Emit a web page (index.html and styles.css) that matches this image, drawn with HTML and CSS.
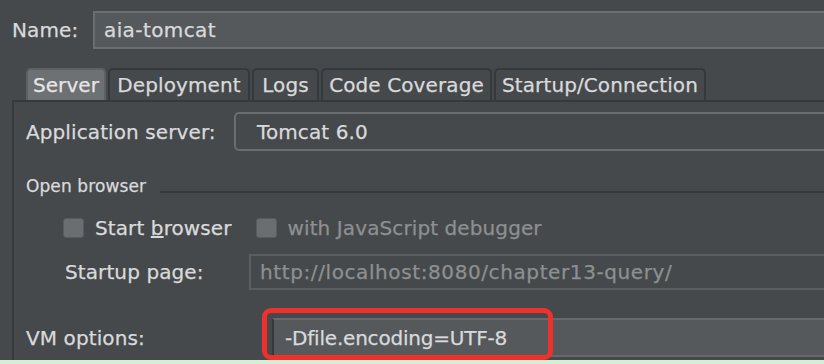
FILE: index.html
```html
<!DOCTYPE html>
<html lang="en">
<head>
    <meta charset="UTF-8">
    <meta name="viewport" content="width=device-width, initial-scale=1.0">
    <title>Run Configuration</title>
    <link rel="stylesheet" href="styles.css">
</head>
<body>
    <div class="dialog">

        <div class="name-row">
            <span class="name-label">Name:</span>
            <div class="field name-field">aia-tomcat</div>
        </div>

        <div class="tabs">
            <div class="tab tab-server selected">Server</div>
            <div class="tab tab-deploy">Deployment</div>
            <div class="tab tab-logs">Logs</div>
            <div class="tab tab-coverage">Code Coverage</div>
            <div class="tab tab-startup">Startup/Connection</div>
        </div>

        <div class="panel">
            <div class="row server-row">
                <span class="label server-label">Application server:</span>
                <div class="combo">Tomcat 6.0</div>
            </div>

            <div class="group-title">
                <span>Open browser</span>
                <div class="group-line"></div>
            </div>

            <div class="row check-row">
                <span class="checkbox"></span>
                <span class="check-text">Start <u>b</u>rowser</span>
                <span class="checkbox"></span>
                <span class="check-text disabled">with <u>J</u>avaScript debugger</span>
            </div>

            <div class="row startup-row">
                <span class="label startup-label">Startup page:</span>
                <div class="field url-field">http://localhost:8080/chapter13-query/</div>
            </div>

            <div class="row vm-row">
                <span class="label vm-label">VM options:</span>
                <div class="vm-wrap">
                    <div class="field vm-field">-Dfile.encoding=UTF-8</div>
                    <span class="highlight"></span>
                </div>
            </div>
        </div>

        <div class="footer-strip"></div>
    </div>
</body>
</html>
```

FILE: styles.css
```css
body {
    font-family: "DejaVu Sans", Verdana, sans-serif;
    margin: 0;
    background-color: #46494b;
    color: #d9dadb;
    font-size: 20px;
    letter-spacing: 0.1px;
    -webkit-text-stroke: 0.25px;
    overflow: hidden;
}

.dialog {
    width: 824px;
    height: 364px;
    display: flex;
    flex-direction: column;
    overflow: hidden;
}

.name-row {
    display: flex;
    align-items: center;
    padding: 11px 0 0 12px;
    height: 38px;
}

.name-label {
    width: 81px;
}

.field {
    box-sizing: border-box;
    display: flex;
    align-items: center;
    white-space: nowrap;
}

.name-field {
    flex: 1;
    height: 38px;
    margin-right: -10px;
    padding-left: 9px;
    background-color: #56595b;
    border: 2px solid #6b6e70;
    letter-spacing: 0.4px;
}

.tabs {
    display: flex;
    gap: 2px;
    margin-top: 19px;
    padding-left: 26px;
    height: 32px;
}

.tab {
    box-sizing: border-box;
    display: flex;
    align-items: center;
    justify-content: center;
    white-space: nowrap;
    border: 2px solid #36393b;
    border-bottom: none;
    border-radius: 5px 5px 0 0;
    background-color: #46494b;
}

.tab-server { width: 80px; }
.tab-deploy { width: 142px; }
.tab-logs { width: 67px; }
.tab-coverage { width: 171px; }
.tab-startup { width: 212px; }

.tab.selected {
    background-color: #6e7173;
    border-color: #5e6163;
    color: #e6e6e6;
}

.panel {
    margin-left: 12px;
    border-top: 2px solid #36393b;
    border-left: 2px solid #36393b;
    padding-left: 12px;
    flex: 1;
}

.row {
    display: flex;
    align-items: center;
}

.server-row {
    margin-top: 10px;
    height: 39px;
}

.server-label {
    width: 208px;
}

.combo {
    box-sizing: border-box;
    flex: 1;
    height: 39px;
    margin-right: -10px;
    padding-left: 21px;
    display: flex;
    align-items: center;
    border: 2px solid #6a6d6f;
    border-radius: 5px;
}

.group-title {
    display: flex;
    align-items: center;
    font-size: 17px;
    margin-top: 25px;
    height: 20px;
}

.group-line {
    flex: 1;
    height: 0;
    margin-left: 14px;
    margin-top: 12px;
    border-top: 2px solid #36393b;
}

.check-row {
    margin-top: 22px;
    height: 20px;
    padding-left: 37px;
}

.checkbox {
    box-sizing: border-box;
    width: 21px;
    height: 20px;
    border-radius: 3px;
    background-color: #6b6e70;
    border: 1px solid #595c5e;
}

.check-text {
    margin-left: 11px;
    margin-right: 24px;
}

.disabled {
    color: #8d9092;
}

.startup-row {
    margin-top: 16px;
    height: 36px;
    padding-left: 39px;
}

.startup-label {
    width: 184px;
}

.url-field {
    flex: 1;
    height: 36px;
    margin-right: -10px;
    padding-left: 9px;
    border: 2px solid #5b5e60;
    color: #8d9092;
    letter-spacing: 0.6px;
}

.vm-row {
    margin-top: 28px;
    height: 39px;
}

.vm-label {
    width: 246px;
}

.vm-wrap {
    position: relative;
    flex: 1;
    margin-right: -10px;
}

.vm-field {
    height: 39px;
    padding-left: 11px;
    background-color: #56595b;
    border: 2px solid #66696b;
    border-left-color: #35383a;
    letter-spacing: -0.2px;
}

.highlight {
    position: absolute;
    left: -10px;
    top: -10px;
    width: 291px;
    height: 52px;
    box-sizing: border-box;
    border: 5px solid #f2302b;
    border-radius: 9px;
}

.footer-strip {
    height: 4px;
    background-color: #d5eed6;
}
```
